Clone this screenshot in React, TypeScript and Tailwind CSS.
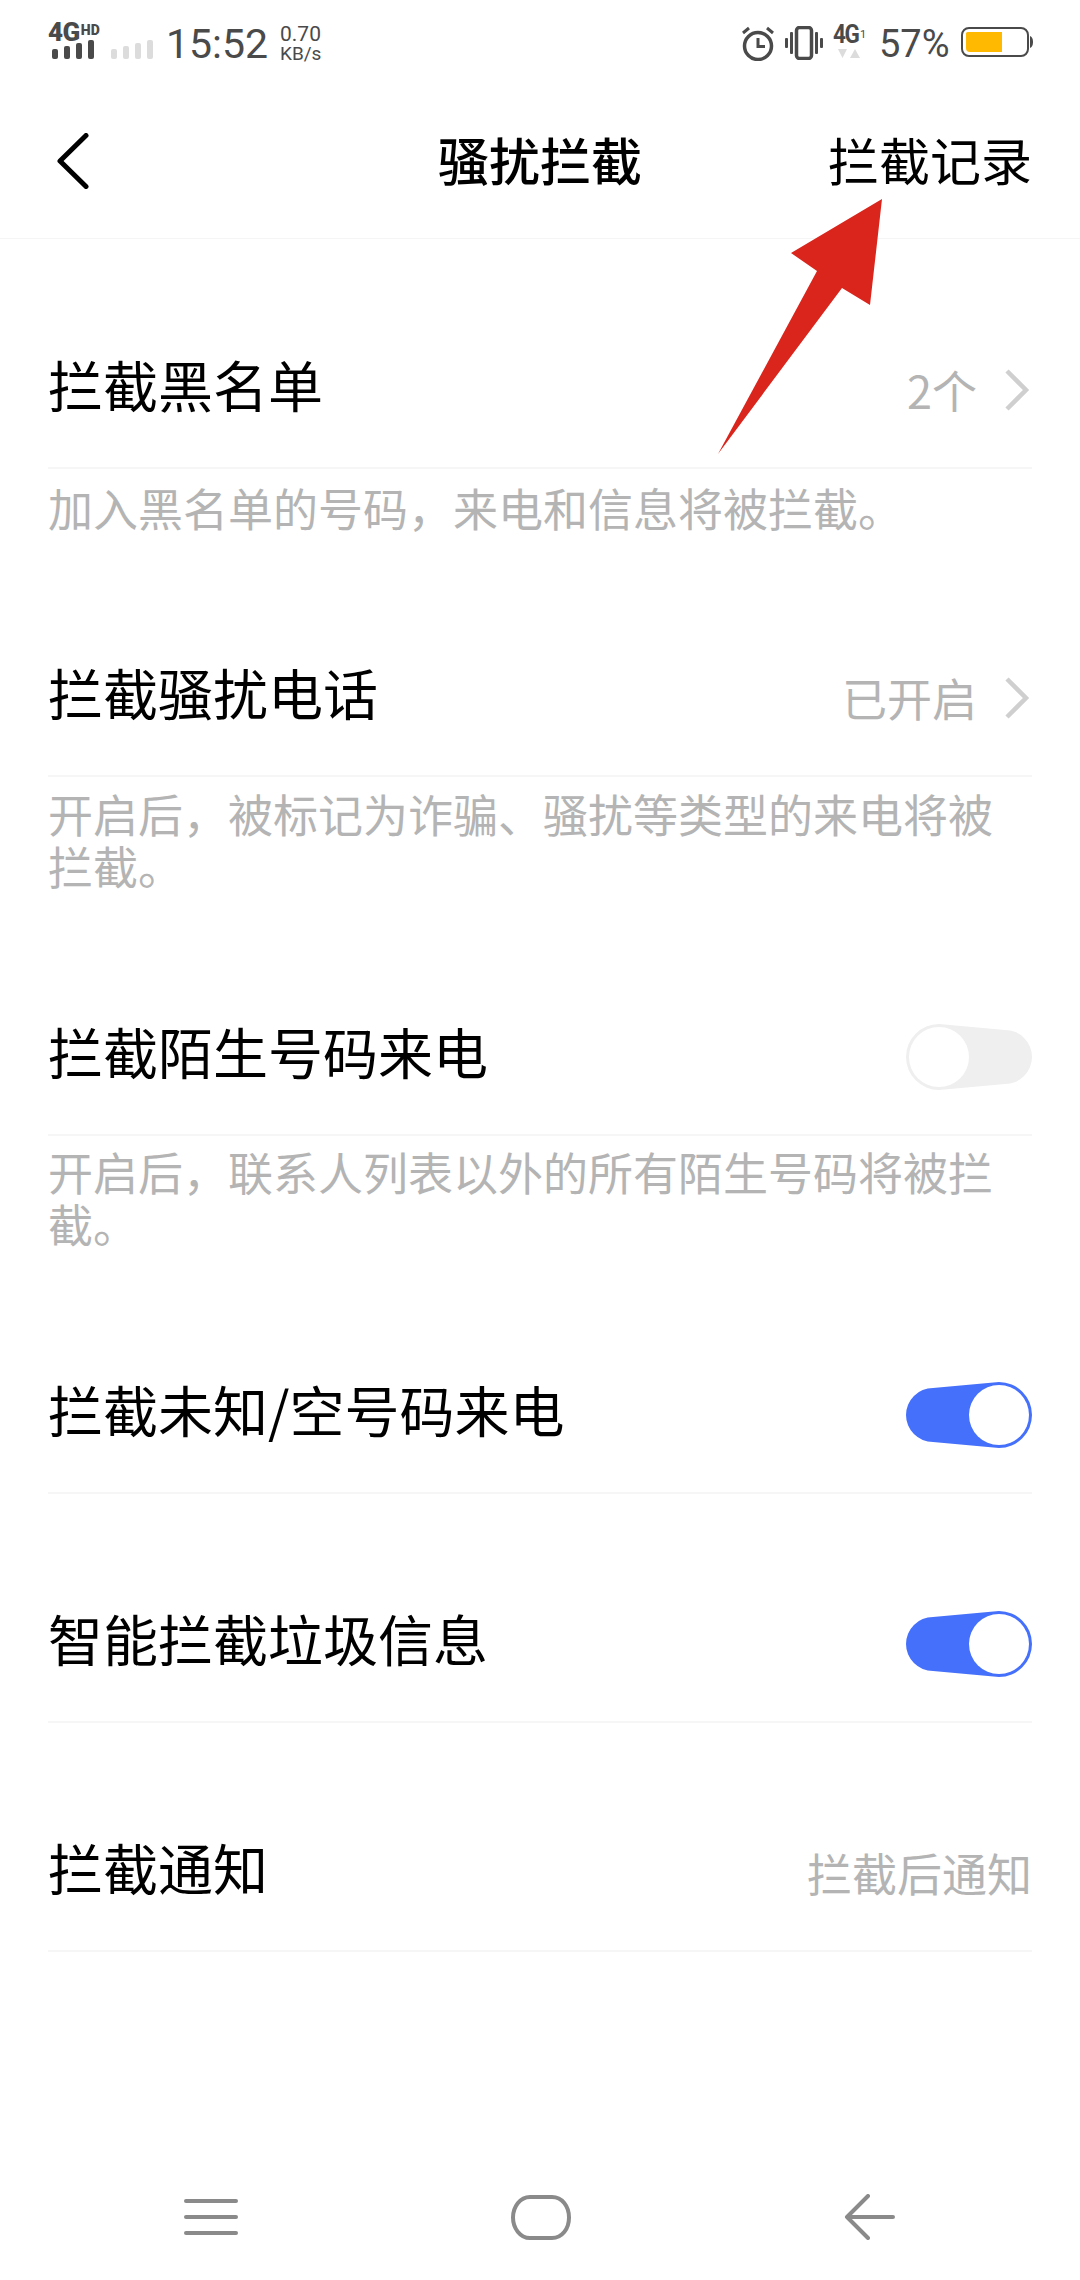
import type { ReactNode } from 'react'

const cjk = "font-['Noto_Sans_CJK_SC','Noto_Sans',sans-serif]"

const SignalBars = ({ color }: { color: string }) => (
  <svg width="42" height="19" viewBox="0 0 42 19" fill={color}>
    <rect x="0" y="9" width="6" height="10" rx="2" />
    <rect x="12" y="6" width="6" height="13" rx="2" />
    <rect x="24" y="3" width="6" height="16" rx="2" />
    <rect x="36" y="0" width="6" height="19" rx="2" />
  </svg>
)

const StatusBar = () => (
  <div className="h-[80px] flex items-start justify-between pl-[48px] pr-[47px] text-[#4a4a4a] font-['Roboto',sans-serif]">
    <div className="flex items-start">
      <div className="flex flex-col w-[105px] mt-[21px]">
        <div className="flex items-start h-[19px] leading-[22px]">
          <span className="text-[26px] font-black tracking-[-0.500px]">4G</span>
          <span className="text-[14px] font-black leading-[14px] ml-[1px] mt-[2px]">HD</span>
        </div>
        <div className="flex gap-[17px] ml-[4px]">
          <SignalBars color="#4a4a4a" />
          <SignalBars color="#dcdcdc" />
        </div>
      </div>
      <span className="ml-[13px] mt-[22px] text-[41px] leading-[44px] w-[114px]">15:52</span>
      <div className="flex flex-col mt-[24px] text-[21px] leading-[20px]">
        <span>0.70</span>
        <span className="text-[19px] leading-[19px]">KB/s</span>
      </div>
    </div>
    <div className="flex items-start">
      <svg width="34" height="36" viewBox="0 0 34 36" fill="none" stroke="#4a4a4a" className="mt-[25px]">
        <circle cx="17" cy="21" r="13.500" strokeWidth="3.500" />
        <path d="M17 13v8.500h7" strokeWidth="3" />
        <path d="M2 8l6-5M32 8l-6-5" strokeWidth="3" />
      </svg>
      <svg width="38" height="34" viewBox="0 0 38 34" fill="#4a4a4a" className="ml-[10px] mt-[26px]">
        <rect x="11.500" y="1.500" width="15" height="31" rx="3" fill="none" stroke="#4a4a4a" strokeWidth="3.500" />
        <rect x="5" y="6" width="3" height="22" rx="1" />
        <rect x="30" y="6" width="3" height="22" rx="1" />
        <rect x="0" y="12" width="3" height="10" rx="1" />
        <rect x="35" y="12" width="3" height="10" rx="1" />
      </svg>
      <div className="flex flex-col items-start ml-[10px] mt-[22px] w-[33px]">
        <div className="flex items-start h-[24px] leading-[26px]">
          <span className="text-[25px] font-bold tracking-[-1.500px] scale-x-90 origin-left w-[27px]">4G</span>
          <span className="text-[11px] mt-[6px] leading-[14px]">1</span>
        </div>
        <svg width="22" height="11" viewBox="0 0 22 11" fill="#dcdcdc" className="mt-[2px] ml-[5px]">
          <path d="M0 1h9l-4.500 9zM12 10h10l-5-9z" />
        </svg>
      </div>
      <span className="ml-[13px] mt-[22px] text-[38px] leading-[44px] w-[70px]">57%</span>
      <svg width="72" height="32" viewBox="0 0 72 32" fill="none" className="ml-[12px] mt-[26px]">
        <rect x="1" y="2" width="66" height="28" rx="7" stroke="#4a4a4a" strokeWidth="2" />
        <path d="M5 7.500a1.500 1.500 0 0 1 1.500-1.500H41v20H9a4 4 0 0 1-4-4z" fill="#ffb900" />
        <path d="M69 10a4 6 0 0 1 3 6 4 6 0 0 1-3 6z" fill="#4a4a4a" />
      </svg>
    </div>
  </div>
)

const NavBar = () => (
  <div className="h-[159px] border-b border-[#f5f5f5] grid grid-cols-[1fr_auto_1fr] items-center px-[48px]">
    <svg width="32" height="56" viewBox="0 0 32 56" fill="none" stroke="#000" strokeWidth="5" strokeLinecap="round" strokeLinejoin="round" className="ml-[9px] mt-[4px]">
      <path d="M29 2.500 3 28l26 25.500" />
    </svg>
    <span className={`${cjk} text-[51px] leading-[60px] font-medium text-black`}>骚扰拦截</span>
    <span className={`${cjk} text-[51px] leading-[60px] text-black justify-self-end`}>拦截记录</span>
  </div>
)

const Chevron = () => (
  <svg width="26" height="42" viewBox="0 0 26 42" fill="none" stroke="#cfcfcf" strokeWidth="4.500" className="ml-[27px] mr-[2px]">
    <path d="M3 2l19 19L3 40" />
  </svg>
)

// vivo-style switch: big knob ring on one end, slimmer track on the other
const Toggle = ({ on }: { on: boolean }) =>
  on ? (
    <svg width="126" height="66" viewBox="0 0 126 66">
      <path d="M27 6 93 0a33 33 0 0 1 0 66L27 60a27 27 0 0 1 0-54z" fill="#4570fb" />
      <circle cx="93" cy="33" r="30" fill="#fff" />
    </svg>
  ) : (
    <svg width="126" height="66" viewBox="0 0 126 66">
      <path d="M33 0 99 6a27 27 0 0 1 0 54L33 66a33 33 0 0 1 0-66z" fill="#efefef" />
      <circle cx="33" cy="33" r="30" fill="#fff" />
    </svg>
  )

const Row = ({ title, right }: { title: string; right?: ReactNode }) => (
  <div className="h-[229px] pt-[113px] flex items-start justify-between border-b-2 border-[#f6f6f6]">
    <span className={`${cjk} text-[55px] leading-[60px] text-black`}>{title}</span>
    <div className="flex items-center h-[60px] mt-[7px]">{right}</div>
  </div>
)

const Hint = ({ className, children }: { className: string; children: ReactNode }) => (
  <p className={`${cjk} text-[45px] leading-[52px] text-[#b4b4b4] ${className}`}>{children}</p>
)

const Value = ({ children }: { children: ReactNode }) => (
  <span className={`${cjk} text-[45px] leading-[52px] text-[#b4b4b4]`}>{children}</span>
)

const BottomNav = () => (
  <div className="mt-auto pb-[40px] pl-[184px] pr-[185px] flex items-center justify-between">
    <svg width="54" height="36" viewBox="0 0 54 36" fill="#8a8a8a">
      <rect x="0" y="0" width="54" height="4" rx="2" />
      <rect x="0" y="16" width="54" height="4" rx="2" />
      <rect x="0" y="32" width="54" height="4" rx="2" />
    </svg>
    <svg width="60" height="45" viewBox="0 0 60 45" fill="none" stroke="#8a8a8a" strokeWidth="4">
      <path d="M19 2h22c10 0 17 9 17 20.500S51 43 41 43H19C9 43 2 33 2 22.500S9 2 19 2z" />
    </svg>
    <svg width="51" height="46" viewBox="0 0 51 46" fill="none" stroke="#8a8a8a" strokeWidth="4" strokeLinecap="round" strokeLinejoin="round">
      <path d="M49 23H3M24 2 3 23l21 21" />
    </svg>
  </div>
)

export default function App() {
  return (
    <div className="relative w-[1080px] h-[2280px] bg-white flex flex-col overflow-hidden">
      <StatusBar />
      <NavBar />
      <div className="mx-[48px] pt-[1px]">
        <Row
          title="拦截黑名单"
          right={
            <>
              <Value>2个</Value>
              <Chevron />
            </>
          }
        />
        <Hint className="pt-[13px] pb-[14px]">加入黑名单的号码，来电和信息将被拦截。</Hint>
        <Row
          title="拦截骚扰电话"
          right={
            <>
              <Value>已开启</Value>
              <Chevron />
            </>
          }
        />
        <Hint className="pt-[11px] pb-[15px]">开启后，被标记为诈骗、骚扰等类型的来电将被拦截。</Hint>
        <Row title="拦截陌生号码来电" right={<Toggle on={false} />} />
        <Hint className="pt-[10px] pb-[15px]">开启后，联系人列表以外的所有陌生号码将被拦截。</Hint>
        <Row title="拦截未知/空号码来电" right={<Toggle on />} />
        <Row title="智能拦截垃圾信息" right={<Toggle on />} />
        <Row title="拦截通知" right={<Value>拦截后通知</Value>} />
      </div>
      <BottomNav />
      {/* red annotation arrow drawn over the screenshot */}
      <svg width="180" height="270" viewBox="0 0 180 270" className="absolute left-[710px] top-[190px]">
        <path d="M172 9 81 63l26 18L8 264 132 98l28 17z" fill="#da251c" />
      </svg>
    </div>
  )
}
